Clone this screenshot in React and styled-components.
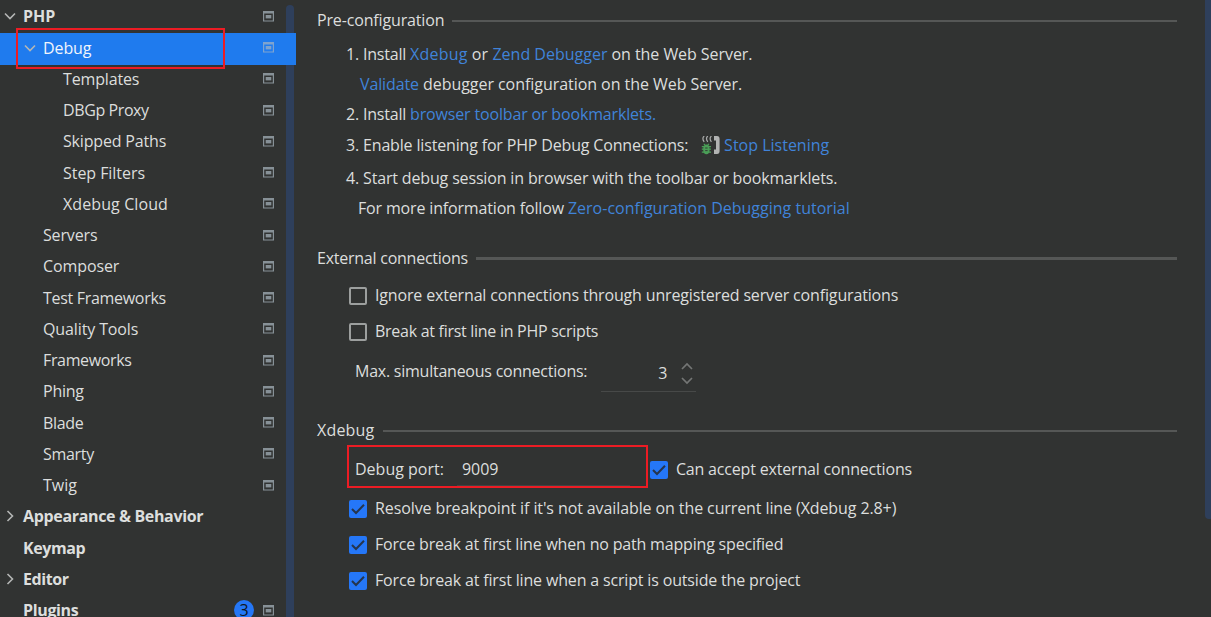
import React from "react";
import styled, { createGlobalStyle } from "styled-components";

const Global = createGlobalStyle`
  * { box-sizing: border-box; }
  body { margin: 0; background: #313332; overflow: hidden; }
`;

const Window = styled.div`
  position: relative;
  display: flex;
  width: 1211px;
  height: 617px;
  overflow: hidden;
  background: #313332;
  color: #dcdedd;
  font: 400 16px/30px "Open Sans", "Noto Sans", sans-serif;
  white-space: nowrap;
`;

const Sidebar = styled.nav`
  position: relative;
  flex: none;
  width: 296px;
  height: 617px;
  padding-top: 0.85px;
  overflow: hidden;
`;

const TreeRow = styled.div`
  position: relative;
  z-index: 1;
  display: flex;
  align-items: center;
  height: 31.25px;
  padding-left: ${(p) => 3 + p.$level * 20}px;
  padding-right: 22px;
  font-weight: ${(p) => (p.$level === 0 ? 700 : 400)};
  color: ${(p) => (p.$selected ? "#f0f5fc" : "#dcdedd")};
  background: ${(p) => (p.$selected ? "#1f7bee" : "none")};
  ${(p) => p.$selected && "height: 32px; margin: 0.9px 0 -1.65px; padding-bottom: 2px;"}
`;

const Arrow = styled.span`
  display: flex;
  justify-content: center;
  width: 14px;
  margin-right: 6px;
`;

const Label = styled.span`
  flex: 1;
  letter-spacing: ${(p) => p.$ls || 0}px;
`;

const Badge = styled.span`
  width: 20px;
  height: 20px;
  margin-right: 9px;
  border-radius: 10px;
  background: #2577f6;
  color: #10151d;
  font-size: 16px;
  font-weight: 400;
  line-height: 20px;
  text-align: center;
`;

const ScrollThumb = styled.div`
  position: absolute;
  top: ${(p) => p.$top}px;
  left: ${(p) => p.$left}px;
  width: 8px;
  height: ${(p) => p.$height}px;
  border-radius: 4px;
  background: #2e3f5b;
`;

const Highlight = styled.div`
  position: absolute;
  z-index: 3;
  left: ${(p) => p.$x}px;
  top: ${(p) => p.$y}px;
  width: ${(p) => p.$w}px;
  height: ${(p) => p.$h}px;
  border: 2px solid #ec1c24;
`;

const Main = styled.main`
  flex: 1;
  padding-left: 21px;
`;

const SectionHeader = styled.div`
  display: flex;
  align-items: center;
  height: ${(p) => p.$h || 30}px;
  margin-top: ${(p) => p.$mt || 0}px;
  width: 860px;
`;

const Rule = styled.div`
  flex: 1;
  height: ${(p) => p.$thick || 2}px;
  margin-left: 8px;
  background: #555756;
`;

const Line = styled.div`
  display: flex;
  align-items: center;
  height: 30px;
  margin-top: ${(p) => p.$mt || 0}px;
  padding-left: ${(p) => p.$pl}px;
`;

const Text = styled.span`
  flex: none;
  line-height: 28px;
  margin-bottom: 2px;
  white-space: pre;
  width: ${(p) => (p.$w ? p.$w + "px" : "auto")};
  letter-spacing: ${(p) => p.$ls || 0}px;
  color: ${(p) => (p.$link ? "#4083d9" : "inherit")};
`;

const Box = styled.span`
  flex: none;
  display: flex;
  width: 18px;
  height: 18px;
  margin-right: 8px;
  border-radius: 2px;
  border: ${(p) => (p.$on ? "0" : "2px solid #9c9f9e")};
  background: ${(p) => (p.$on ? "#2577f8" : "transparent")};
`;

const Spinner = styled.span`
  display: flex;
  align-items: center;
  justify-content: flex-end;
  width: 95px;
  height: 36px;
  margin: 4px 0 0 14px;
  padding-right: 3px;
  border-bottom: 1px solid #474948;
`;

const PortInput = styled.span`
  width: 173px;
  height: 32px;
  margin: 0 20px 0 13px;
  padding-left: 5px;
  border-bottom: 1px solid #414342;
`;

const Chevron = ({ open }) => (
  <svg width="14" height="14" viewBox="0 0 14 14" fill="none" stroke="#b4b6b5" strokeWidth="1.6">
    <path d={open ? "M2 4.5 L7 9.5 L12 4.5" : "M4.5 2 L9.5 7 L4.5 12"} />
  </svg>
);

const ProjectIcon = ({ selected }) => (
  <svg width="11" height="11" viewBox="0 0 11 11">
    <g fill={selected ? "#7ea3cf" : "#879197"}>
      <path fillRule="evenodd" d="M0 0H11V10.6H0ZM1.2 2.4V9.4H9.8V2.4Z" />
      <rect x="2.7" y="4" width="5.6" height="3.4" />
    </g>
  </svg>
);

const Check = ({ on }) => (
  <Box $on={on}>
    {on && (
      <svg width="18" height="18" viewBox="0 0 18 18" fill="none" stroke="#25354d" strokeWidth="2">
        <path d="M3 9 L7 13 L15 4.8" />
      </svg>
    )}
  </Box>
);

const ListenIcon = () => (
  <svg width="19" height="20" viewBox="0 0 19 20" fill="none">
    <g transform="translate(0 -1)">
      <path d="M3.2 1 Q0.6 3.5 3.2 6.8M6.8 1 Q4.2 3.5 6.8 6.8M10.4 1 Q7.8 3.5 10.4 6.8" stroke="#a9abaa" strokeWidth="1.2" />
      <path d="M13 1H16Q18.6 1 18.6 4V16Q18.6 19 16 19H13V14.6H15V5.4H13Z" fill="#b1b3b2" />
      <path d="M2.8 8.8L4 10M8 8.8L6.8 10M0.8 11.6H10M0.8 14.2H10M0.8 17.2H10" stroke="#4a9e57" strokeWidth="1.2" />
      <ellipse cx="5.4" cy="14.4" rx="3.2" ry="4.8" fill="#4a9e57" />
      <path d="M4.2 13H6.6M4.2 15.6H6.6" stroke="#313332" strokeWidth="0.9" />
    </g>
  </svg>
);

const Steps = () => (
  <svg width="12" height="24" viewBox="0 0 12 24" fill="none" stroke="#747675" strokeWidth="1.7">
    <path d="M1 7 L6 2 L11 7M1 16 L6 21 L11 16" />
  </svg>
);

const tree = [
  { t: "PHP", l: 0, a: "open", p: 1 },
  { t: "Debug", l: 1, a: "open", p: 1, s: 1, ls: -0.1 },
  { t: "Templates", l: 2, p: 1, ls: -0.15 },
  { t: "DBGp Proxy", l: 2, p: 1, ls: -0.4 },
  { t: "Skipped Paths", l: 2, p: 1, ls: -0.17 },
  { t: "Step Filters", l: 2, p: 1, ls: -0.05 },
  { t: "Xdebug Cloud", l: 2, p: 1, ls: 0.1 },
  { t: "Servers", l: 1, p: 1, ls: -0.15 },
  { t: "Composer", l: 1, p: 1, ls: -0.1 },
  { t: "Test Frameworks", l: 1, p: 1, ls: -0.3 },
  { t: "Quality Tools", l: 1, p: 1, ls: -0.12 },
  { t: "Frameworks", l: 1, p: 1, ls: -0.35 },
  { t: "Phing", l: 1, p: 1, ls: -0.25 },
  { t: "Blade", l: 1, p: 1, ls: -0.3 },
  { t: "Smarty", l: 1, p: 1, ls: -0.3 },
  { t: "Twig", l: 1, p: 1 },
  { t: "Appearance & Behavior", l: 0, a: "closed", ls: -0.34 },
  { t: "Keymap", l: 0, ls: -0.4 },
  { t: "Editor", l: 0, a: "closed", ls: -0.4 },
  { t: "Plugins", l: 0, p: 1, b: 3, ls: -0.35 },
];

export default function App() {
  return (
    <Window>
      <Global />
      <Sidebar>
        <ScrollThumb $top={5} $left={286} $height={640} />
        {tree.map((n) => (
          <TreeRow key={n.t} $level={n.l} $selected={n.s}>
            <Arrow>{n.a && <Chevron open={n.a === "open"} />}</Arrow>
            <Label $ls={n.ls}>{n.t}</Label>
            {n.b && <Badge>{n.b}</Badge>}
            {n.p && <ProjectIcon selected={n.s} />}
          </TreeRow>
        ))}
      </Sidebar>
      <Main>
        <SectionHeader $h={42}><Text $ls={-0.15}>Pre-configuration</Text><Rule /></SectionHeader>
        <Line $mt={-2} $pl={29}>
          <Text $ls={-0.2}>1. Install </Text><Text $link $ls={0.2}>Xdebug</Text><Text $ls={0.1}> or </Text><Text $link>Zend Debugger</Text><Text $ls={-0.06}> on the Web Server.</Text>
        </Line>
        <Line $pl={43}><Text $link $ls={-0.12}>Validate</Text><Text $ls={-0.05}> debugger configuration on the Web Server.</Text></Line>
        <Line $pl={29}><Text $ls={-0.2}>2. Install </Text><Text $link $ls={-0.16}>browser toolbar or bookmarklets.</Text></Line>
        <Line $mt={1} $pl={29}>
          <Text $w={355} $ls={-0.165}>3. Enable listening for PHP Debug Connections:</Text><ListenIcon /><Text $link $ls={-0.05}>{" "}</Text><Text $link>Stop Listening</Text>
        </Line>
        <Line $mt={3} $pl={29}><Text $ls={-0.157}>4. Start debug session in browser with the toolbar or bookmarklets.</Text></Line>
        <Line $pl={41}><Text $ls={-0.16}>For more information follow </Text><Text $link>Zero-configuration Debugging tutorial</Text></Line>

        <SectionHeader $mt={19.5}><Text $ls={-0.24}>External connections</Text><Rule $thick={3} /></SectionHeader>
        <Line $mt={7.5} $pl={32}><Check /><Text $ls={-0.157}>Ignore external connections through unregistered server configurations</Text></Line>
        <Line $mt={6} $pl={32}><Check /><Text $ls={-0.28}>Break at first line in PHP scripts</Text></Line>
        <Line $mt={10} $pl={38}>
          <Text $ls={-0.24}>Max. simultaneous connections:</Text>
          <Spinner><Text $w={23}>3</Text><Steps /></Spinner>
        </Line>

        <SectionHeader $mt={29}><Text $ls={0.2}>Xdebug</Text><Rule /></SectionHeader>
        <Line $mt={9} $pl={38}>
          <Text>Debug port:</Text><PortInput>9009</PortInput><Check on /><Text $ls={-0.18}>Can accept external connections</Text>
        </Line>
        <Line $mt={9} $pl={32}><Check on /><Text $ls={-0.1}>Resolve breakpoint if it's not available on the current line (Xdebug 2.8+)</Text></Line>
        <Line $mt={6} $pl={32}><Check on /><Text $ls={-0.185}>Force break at first line when no path mapping specified</Text></Line>
        <Line $mt={6} $pl={32}><Check on /><Text $ls={-0.165}>Force break at first line when a script is outside the project</Text></Line>
      </Main>
      <ScrollThumb $top={-6} $left={1205} $height={525} />
      <Highlight $x={16} $y={28} $w={209} $h={41} />
      <Highlight $x={347} $y={445} $w={301} $h={43} />
    </Window>
  );
}
